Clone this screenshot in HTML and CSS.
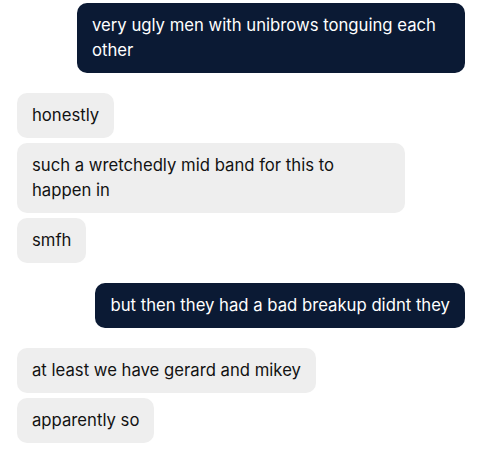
FILE: index.html
```html
<!DOCTYPE html>
<html lang="en">
<head>
  <meta charset="UTF-8" />
  <meta name="viewport" content="width=device-width, initial-scale=1.0" />
  <title>Chat</title>
  <link rel="stylesheet" href="styles.css">
</head>
<body>
  <div class="chat">
    <div class="group sent">
      <div class="bubble">very ugly men with unibrows tonguing each other</div>
    </div>

    <div class="group received">
      <div class="bubble">honestly</div>
      <div class="bubble">such a wretchedly mid band for this to happen in</div>
      <div class="bubble">smfh</div>
    </div>

    <div class="group sent">
      <div class="bubble">but then they had a bad breakup didnt they</div>
    </div>

    <div class="group received">
      <div class="bubble">at least we have gerard and mikey</div>
      <div class="bubble">apparently so</div>
    </div>
  </div>
</body>
</html>
```

FILE: styles.css
```css
:root {
  --navy: #0b1a34;
  --bubble-gray: #eeeeee;
  --ink: #121212;
}

body {
  margin: 0;
  background-color: white;
  font-family: 'Inter', sans-serif;
  font-size: 16.7px;
  color: var(--ink);
}

.chat {
  display: flex;
  flex-direction: column;
  gap: 20px;
  padding: 3px 17px;
}

.group {
  display: flex;
  flex-direction: column;
  gap: 5px;
}

.sent {
  align-items: flex-end;
}

.received {
  align-items: flex-start;
}

.bubble {
  max-width: 358px;
  padding: 10px 15px;
  line-height: 25px;
  border-radius: 10px;
}

.sent .bubble {
  background-color: var(--navy);
  color: white;
}

.received .bubble {
  background-color: var(--bubble-gray);
}
```
